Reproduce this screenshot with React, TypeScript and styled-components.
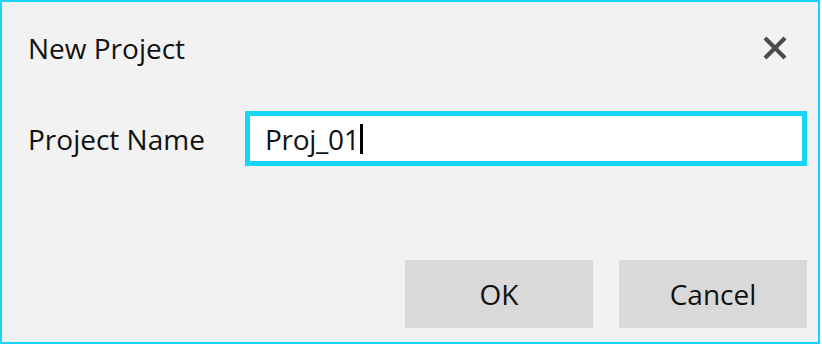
import React from "react";
import styled, { createGlobalStyle } from "styled-components";

const GlobalStyle = createGlobalStyle`
  html, body {
    margin: 0;
    padding: 0;
    background: #f6f6f6;
  }
  body {
    font-family: "Open Sans", "Noto Sans", sans-serif;
  }
`;

const Dialog = styled.div`
  box-sizing: border-box;
  width: 820px;
  height: 344px;
  border: 2px solid #17d4fb;
  background: #f2f2f2;
  display: flex;
  flex-direction: column;
  padding: 0 11px 14px 26px;
  color: #111;
`;

const Header = styled.div`
  height: 92px;
  display: flex;
  align-items: center;
  justify-content: space-between;
`;

const Title = styled.h1`
  margin: 0;
  font-size: 28px;
  font-weight: 400;
`;

const CloseButton = styled.button`
  width: 44px;
  height: 44px;
  margin-right: 10px;
  border: none;
  background: transparent;
  display: flex;
  align-items: center;
  justify-content: center;
  padding: 0;
  cursor: pointer;
`;

const FieldRow = styled.div`
  margin-top: 17px;
  display: flex;
  align-items: center;
`;

const Label = styled.label`
  width: 217px;
  font-size: 28px;
`;

const InputBox = styled.div`
  box-sizing: border-box;
  flex: 1;
  height: 55px;
  border: 5px solid #17d4fb;
  background: #fff;
  display: flex;
  align-items: center;
  padding-left: 15px;
  font-size: 28px;
  letter-spacing: -0.3px;
`;

const Caret = styled.span`
  display: inline-block;
  width: 3px;
  height: 30px;
  margin-left: 1px;
  background: #000;
`;

const Footer = styled.div`
  margin-top: auto;
  display: flex;
  justify-content: flex-end;
  gap: 26px;
`;

const Button = styled.button`
  width: 188px;
  height: 68px;
  border: none;
  background: #d9d9d9;
  font-family: inherit;
  font-size: 28px;
  color: #111;
  cursor: pointer;
`;

export default function App() {
  return (
    <>
      <GlobalStyle />
      <Dialog>
        <Header>
          <Title>New Project</Title>
          <CloseButton aria-label="Close">
            <svg width="26" height="26" viewBox="0 0 26 26">
              <path d="M3 3 L23 23 M23 3 L3 23" stroke="#4b4b4b" strokeWidth="4.2" />
            </svg>
          </CloseButton>
        </Header>
        <FieldRow>
          <Label>Project Name</Label>
          <InputBox>
            <span>Proj_01</span>
            <Caret />
          </InputBox>
        </FieldRow>
        <Footer>
          <Button>OK</Button>
          <Button>Cancel</Button>
        </Footer>
      </Dialog>
    </>
  );
}
